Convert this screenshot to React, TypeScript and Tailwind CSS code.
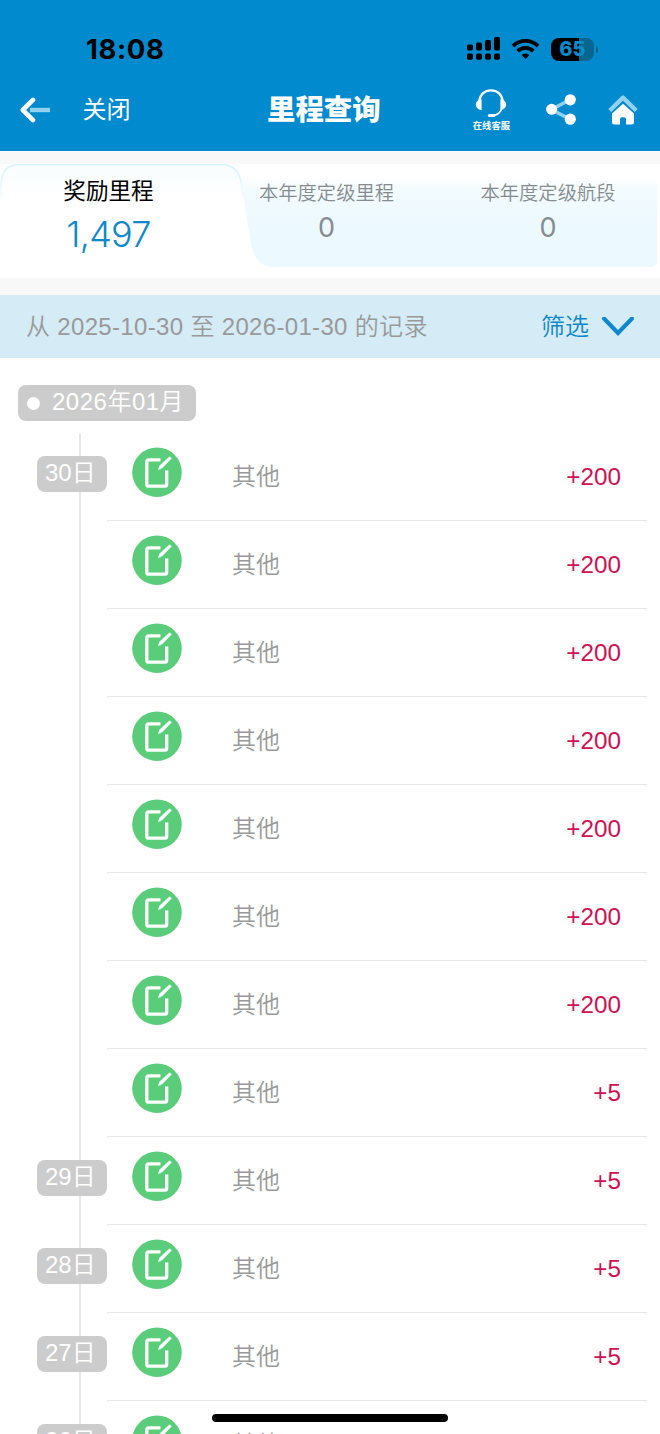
import React from 'react';

type MileRecord = {
  day?: string;
  title: string;
  miles: number;
};

const records: MileRecord[] = [
  {day: '30日', title: '其他', miles: 200},
  {title: '其他', miles: 200},
  {title: '其他', miles: 200},
  {title: '其他', miles: 200},
  {title: '其他', miles: 200},
  {title: '其他', miles: 200},
  {title: '其他', miles: 200},
  {title: '其他', miles: 5},
  {day: '29日', title: '其他', miles: 5},
  {day: '28日', title: '其他', miles: 5},
  {day: '27日', title: '其他', miles: 5},
  {day: '26日', title: '其他', miles: 5},
];

function SignalIcon() {
  const bars = [
    {x: 0, y: 7.5, h: 6},
    {x: 9, y: 5.5, h: 8},
    {x: 18, y: 3, h: 10.5},
    {x: 27, y: 0, h: 13.5},
  ];
  return (
    <svg className="w-[33px] h-[24px]" viewBox="0 0 33 24">
      {bars.map((bar) => (
        <g key={bar.x}>
          <rect x={bar.x} y={bar.y} width="6" height={bar.h} rx="1.7" />
          <rect x={bar.x} y="16.5" width="6" height="6.3" rx="1.7" />
        </g>
      ))}
    </svg>
  );
}

function WifiIcon() {
  return (
    <svg className="w-[29px] h-[22px]" viewBox="0 0 30 22" fill="none" stroke="#000" strokeWidth="4">
      <path d="M2 7.9a18.6 18.6 0 0 1 26 0" />
      <path d="M6.9 13.1a11.6 11.6 0 0 1 16.2 0" />
      <path d="M15 21.3l-4-4.1a5.8 5.8 0 0 1 8 0z" fill="#000" stroke="none" />
    </svg>
  );
}

function BatteryIcon() {
  return (
    <div className="flex items-center">
      <div className="w-[43px] h-[23px] rounded-[8px] bg-[linear-gradient(90deg,#000_0_65%,#05668f_65%)] flex items-center justify-center font-['Inter',sans-serif] font-extrabold text-[20px] leading-none text-[#0a8bcb]">
        65
      </div>
      <div className="ml-[1.5px] w-[2.5px] h-[7px] rounded-r-full bg-[#05668f]" />
    </div>
  );
}

function BackIcon() {
  return (
    <svg className="w-[31px] h-[26px]" viewBox="0 0 31 26" fill="none">
      <path d="M10 13H30" stroke="#93d0ee" strokeWidth="4.4" />
      <path d="M13 2.9L2.8 13 13 23.1" stroke="#fff" strokeWidth="4.6" strokeLinecap="round" strokeLinejoin="round" />
    </svg>
  );
}

function ServiceIcon() {
  return (
    <svg className="w-[32px] h-[29px]" viewBox="0 0 32 29" fill="none">
      <path d="M4.2 12C5.5 5 10 1.3 16 1.3S26.5 5 27.8 12" stroke="#fff" strokeWidth="2.3" />
      <path d="M6.6 10.3v10.9C3.3 21 .8 18.5.8 15.6s2.5-5.1 5.8-5.3zM25.4 10.3v10.9c3.3-.2 5.8-2.7 5.8-5.6s-2.5-5.1-5.8-5.3z" fill="#fff" />
      <path d="M27.3 18c-1.3 4.6-4.3 7.8-8.6 8.4" stroke="#fff" strokeWidth="1.7" />
      <path d="M14.3 26.5h4.6" stroke="#fff" strokeWidth="3" strokeLinecap="round" />
    </svg>
  );
}

function ShareIcon() {
  return (
    <svg className="w-[30px] h-[31px]" viewBox="0 0 30 31">
      <path d="M24.5 5.5L5.5 15.5l19 10" fill="none" stroke="#93d0ee" strokeWidth="3.6" />
      <circle cx="24.3" cy="5.8" r="5.6" fill="#fff" />
      <circle cx="5.6" cy="15.3" r="5.5" fill="#fff" />
      <circle cx="24.3" cy="25.2" r="5.6" fill="#fff" />
    </svg>
  );
}

function HomeIcon() {
  return (
    <svg className="w-[30px] h-[30px]" viewBox="0 0 30 30">
      <path d="M1.8 15.5L15 2.6l13.2 12.9" fill="none" stroke="#93d0ee" strokeWidth="4.3" strokeLinejoin="round" />
      <path d="M15 8.8L26 18.5V27a2.5 2.5 0 0 1-2.5 2.5H18v-5.3a2 2 0 0 0-2-2h-2a2 2 0 0 0-2 2v5.300H6.500A2.500 2.500 0 0 1 4 27v-8.500z" fill="#fff" />
    </svg>
  );
}

function RecordIcon() {
  return (
    <svg className="w-[50px] h-[50px] shrink-0" viewBox="0 0 50 50" fill="none">
      <circle cx="25" cy="25.200" r="24.800" fill="#5bcc79" />
      <path d="M28.500 12.800H16.800a2 2 0 0 0-2 2v22.400a2 2 0 0 0 2 2h15.900a2 2 0 0 0 2-2V23.500" stroke="#fff" strokeWidth="3.300" />
      <path d="M36.800 10.300q1.200-.8 2 .1t-.1 1.900l-8.300 8.500-4 2 1.300-4.100z" fill="#fff" stroke="#fff" strokeWidth="0.500" />
    </svg>
  );
}

function Header() {
  return (
    <header className="h-[151px] bg-[#018acd]">
      <div className="h-[68px] pt-[30px] pl-[86px] pr-[62px] flex items-center justify-between">
        <span className="font-['Inter',sans-serif] font-bold text-[27.500px] leading-[38px] tracking-[0.600px]">18:08</span>
        <div className="flex items-center gap-[11px]">
          <SignalIcon />
          <WifiIcon />
          <BatteryIcon />
        </div>
      </div>
      <nav className="h-[83px] pl-5 pr-[22px] flex items-center text-white">
        <div className="w-[247px] flex items-center gap-[31.500px]">
          <BackIcon />
          <span className="text-[24px] font-normal">关闭</span>
        </div>
        <h1 className="pt-px text-[28.400px] font-black leading-8">里程查询</h1>
        <div className="ml-auto flex items-center">
          <div className="flex flex-col items-center mr-[36px]">
            <ServiceIcon />
            <span className="mt-[3px] text-[9.300px] leading-[10px] font-bold">在线客服</span>
          </div>
          <ShareIcon />
          <div className="ml-[32px]">
            <HomeIcon />
          </div>
        </div>
      </nav>
    </header>
  );
}

// Curved shapes behind the three totals
function TotalsBackground() {
  return (
    <svg className="absolute inset-0 w-full h-full" viewBox="0 0 660 114" fill="none">
      <defs>
        <linearGradient id="panel" x1="0" y1="12" x2="0" y2="60" gradientUnits="userSpaceOnUse">
          <stop stopColor="#fff" />
          <stop offset="0.3" stopColor="#f3fbff" />
          <stop offset="1" stopColor="#ecf9fe" />
        </linearGradient>
        <linearGradient id="active" x1="0" y1="0" x2="0" y2="34" gradientUnits="userSpaceOnUse">
          <stop stopColor="#f8fdff" />
          <stop offset="1" stopColor="#fff" />
        </linearGradient>
        <linearGradient id="edge" x1="0" y1="0" x2="0" y2="42" gradientUnits="userSpaceOnUse">
          <stop stopColor="#d2f0fd" />
          <stop offset="1" stopColor="#fff" />
        </linearGradient>
      </defs>
      <path d="M240 12H650q7 0 7 7v78q0 6-7 6H274c-14 0-20-9-23-23z" fill="url(#panel)" />
      <path d="M0 36V17C3 6 9 .8 18 .8H222c11 0 17 6 19 17l3 18z" fill="url(#active)" />
      <path d="M.8 40V20C2 7 8 .8 18 .8H222c11 0 17 6 19 17l3.500 23" stroke="url(#edge)" strokeWidth="1.500" />
    </svg>
  );
}

function Totals() {
  return (
    <section className="relative h-[114px] mt-[13px] bg-white">
      <TotalsBackground />
      <div className="relative flex text-center">
        <div className="w-[217px] pt-3">
          <p className="text-[22.600px] leading-8 font-normal text-black">奖励里程</p>
          <p className="mt-[6px] font-['Inter',sans-serif] font-[350] text-[36px] leading-10 tracking-[-0.700px] text-[#0e88ca]">1,497</p>
        </div>
        <div className="w-[219px] pt-[14px] text-[#868c8e]">
          <p className="text-[19.300px] leading-8">本年度定级里程</p>
          <p className="font-['Inter',sans-serif] font-normal text-[27px] leading-9">0</p>
        </div>
        <div className="w-[224px] pt-[14px] text-[#868c8e]">
          <p className="text-[19.300px] leading-8">本年度定级航段</p>
          <p className="font-['Inter',sans-serif] font-normal text-[27px] leading-9">0</p>
        </div>
      </div>
    </section>
  );
}

function FilterBar() {
  return (
    <div className="mt-[17px] h-[63px] pl-[26px] pr-[26px] flex items-center justify-between bg-[#d5ebf6] text-[24px] text-[#999]">
      <span className="tracking-[0.330px]">从 2025-10-30 至 2026-01-30 的记录</span>
      <button className="flex items-center gap-[13px] text-[#0e88ca]">
        筛选
        <svg className="w-[32px] h-[20px]" viewBox="0 0 32 20" fill="none" stroke="#0e88ca" strokeWidth="4">
          <path d="M2 1.500l14 14.500L30 1.500" strokeLinecap="round" />
        </svg>
      </button>
    </div>
  );
}

function RecordRow({day, title, miles}: MileRecord) {
  return (
    <li className="h-[88px] flex">
      <div className="w-[107px] pl-[37px] pt-[23px]">
        {day && (
          <div className="h-[36px] rounded-[8px] bg-[#ccc] pl-[8px] text-[24px] leading-[33px] text-white whitespace-nowrap">{day}</div>
        )}
      </div>
      <div className="w-[540px] pl-[25px] pr-[26px] pt-[14px] flex items-start border-b-[1.500px] border-[#e8e8e8]">
        <RecordIcon />
        <span className="ml-[50px] mt-[12px] text-[24px] leading-9 text-[#999]">{title}</span>
        <span className="ml-auto mt-[12px] text-[24.300px] leading-9 text-[#cf1151]">+{miles}</span>
      </div>
    </li>
  );
}

export default function App() {
  return (
    <div className="relative w-[660px] h-[1434px] overflow-hidden bg-[#f8f8f8] font-['Liberation_Sans','Noto_Sans_CJK_SC',sans-serif] font-[350]">
      <Header />
      <Totals />
      <FilterBar />
      <main className="h-[1100px] pt-[27px] bg-white">
        <div className="ml-[18px] w-[178px] h-[36px] rounded-[8px] bg-[#ccc] pl-[9px] flex items-center gap-[12px] text-[24px] leading-[32px] text-white whitespace-nowrap">
          <span className="w-[13px] h-[13px] rounded-full bg-white" />
          <span className="pb-[3px] tracking-[0.500px]">2026年01月</span>
        </div>
        <ul className="mt-3 bg-[linear-gradient(90deg,transparent_79px,#e8e8e8_79px_81px,transparent_81px)]">
          {records.map((record, index) => (
            <RecordRow key={index} {...record} />
          ))}
        </ul>
      </main>
      {/* home indicator */}
      <div className="absolute left-[212px] bottom-[12px] w-[236px] h-[8px] rounded-full bg-black" />
    </div>
  );
}
